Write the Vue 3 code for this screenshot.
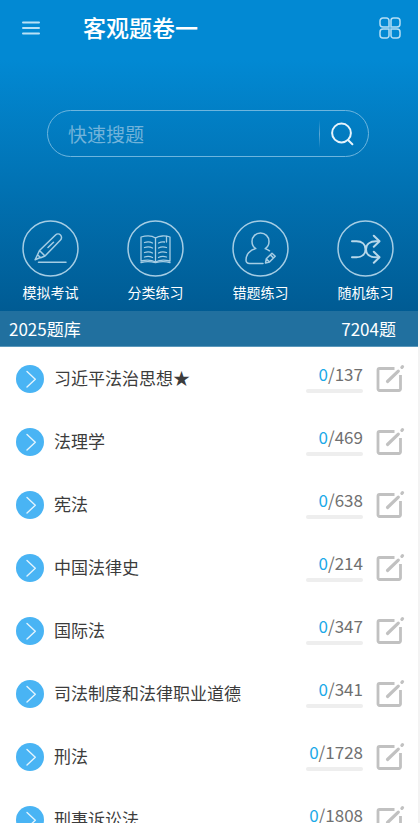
<script setup>
import { ref } from 'vue'

const keyword = ref('')

const modes = [
  { id: 'exam', label: '模拟考试' },
  { id: 'category', label: '分类练习' },
  { id: 'mistakes', label: '错题练习' },
  { id: 'random', label: '随机练习' }
]

const chapters = [
  { name: '习近平法治思想★', done: 0, total: 137 },
  { name: '法理学', done: 0, total: 469 },
  { name: '宪法', done: 0, total: 638 },
  { name: '中国法律史', done: 0, total: 214 },
  { name: '国际法', done: 0, total: 347 },
  { name: '司法制度和法律职业道德', done: 0, total: 341 },
  { name: '刑法', done: 0, total: 1728 },
  { name: '刑事诉讼法', done: 0, total: 1808 }
]
</script>

<template>
  <div class="page">
    <header class="hero">
      <div class="topbar">
        <button class="icon-btn" type="button" aria-label="菜单">
          <svg width="18" height="14" viewBox="0 0 18 14" fill="none" stroke="#b9e1f6" stroke-width="2" stroke-linecap="round">
            <path d="M1 1.500h16M1 7h16M1 12.500h16" />
          </svg>
        </button>
        <h1 class="title">客观题卷一</h1>
        <button class="icon-btn" type="button" aria-label="更多">
          <svg width="22" height="22" viewBox="0 0 22 22" fill="none" stroke="#b5def5" stroke-width="1.5">
            <path d="M4 1h3.5a2.5 2.5 0 0 1 2.5 2.5V10H4a3 3 0 0 1-3-3V4a3 3 0 0 1 3-3z" />
            <path d="M14.5 1H18a3 3 0 0 1 3 3v3a3 3 0 0 1-3 3h-6V3.500a2.500 2.500 0 0 1 2.500-2.500z" />
            <path d="M4 12h6v6.500A2.500 2.500 0 0 1 7.500 21H4a3 3 0 0 1-3-3v-3a3 3 0 0 1 3-3z" />
            <path d="M12 12h6a3 3 0 0 1 3 3v3a3 3 0 0 1-3 3h-3.500a2.500 2.500 0 0 1-2.500-2.500z" />
          </svg>
        </button>
      </div>

      <form class="search" @submit.prevent>
        <input v-model="keyword" class="search-input" type="text" placeholder="快速搜题" aria-label="快速搜题" />
        <span class="search-line"></span>
        <button class="search-btn" type="submit" aria-label="搜索">
          <svg width="24" height="24" viewBox="0 0 24 24" fill="none" stroke="#e6f4fc" stroke-width="2" stroke-linecap="round">
            <circle cx="11.500" cy="11" r="9.400" />
            <path d="M18 18l4.400 4.200" />
          </svg>
        </button>
      </form>

      <nav class="modes">
        <button v-for="m in modes" :key="m.id" class="mode" type="button">
          <svg class="mode-icon" viewBox="0 0 57 57" fill="none" stroke="#a5cde4" stroke-width="1.500" stroke-linecap="round" stroke-linejoin="round">
            <circle cx="28.500" cy="28.500" r="27.500" />
            <g v-if="m.id === 'exam'">
              <path d="M17.500 30.500L33.500 15a3.500 3.500 0 0 1 5 5L23 36M17.500 30.500l5.500 5.500M17.500 30.500l-2 4.200 3.200 3.100L23 36M15.500 34.700l-2.400 5 5.300-2.200M26 27.500l5.500-5.300" />
              <path d="M16.500 42.200h27.500" />
            </g>
            <g v-else-if="m.id === 'category'" stroke-width="1.300">
              <path d="M28.500 18c-3.500-2.500-9.500-2.500-14.500-1v24c4.500-1.200 11-1 14.500 1 3.500-2 10-2.200 14.500-1V17c-4.500-1.500-11-1.500-14.500 1zM28.500 18v24" />
              <path d="M14 42.500c5-1.200 11-.8 14.500.2 3.500-1 9.500-1.400 14.500-.2M39.500 16.500v5.500" />
              <path d="M17.500 22.500c3-1.100 5.500-.9 8 .5M17.500 27.500c3-1.100 5.500-.9 8 .5M17.500 32.500c3-1.100 5.500-.9 8 .5M17.500 37c3-1.100 5.500-.9 8 .5M31.500 23c2-1 4-1.400 6-1M31.500 28c2.500-1.400 5-1.600 8-.5M31.500 33c2.500-1.400 5-1.600 8-.5M31.500 37.500c2.500-1.400 5-1.600 8-.5" />
            </g>
            <g v-else-if="m.id === 'mistakes'">
              <path d="M37.500 30.800c-1.300-1-2.700-1.700-4.300-2.200 2.300-1.500 3.800-4.200 3.800-7.200a8.500 8.500 0 0 0-17 0c0 3 1.500 5.700 3.800 7.200-6 1.400-9.800 6-9.800 11.400 0 2.200 1.300 3.400 3.600 3.600H31" />
              <path d="M33.500 43l.8-4.200 5.700-5.600 3.200 3-5.700 5.800zM38.300 34.900l3.100 3M34.300 38.800l3.200 3.200" />
            </g>
            <g v-else stroke-width="2" stroke="#b8d8ea">
              <path d="M15 21.300h4.500c5.500 0 9 3.200 9 8s-3.500 8-9 8H15" />
              <path d="M42 21.300h-3c-6 0-10 3-10 8s4 8 10 8h3" />
              <path d="M36.800 15.800l5.700 5.500-5.700 5.500M36.800 31.800l5.700 5.500-5.700 5.500" />
            </g>
          </svg>
          <span class="mode-label">{{ m.label }}</span>
        </button>
      </nav>

      <div class="summary">
        <span>2025题库</span>
        <span>7204题</span>
      </div>
    </header>

    <ul class="chapters">
      <li v-for="c in chapters" :key="c.name" class="chapter">
        <button class="expand" type="button" :aria-label="'展开' + c.name">
          <svg width="28" height="28" viewBox="0 0 28 28" fill="none">
            <circle cx="14" cy="14" r="14" fill="#49b4f4" />
            <path d="M11 6.500l8.300 7.700-8.300 7.700" stroke="#e3f4fe" stroke-width="1.400" stroke-linecap="round" stroke-linejoin="round" />
          </svg>
        </button>
        <span class="name">{{ c.name }}</span>
        <div class="progress">
          <span class="count"><span class="done">{{ c.done }}</span>/{{ c.total }}</span>
          <span class="track"><span class="fill" :style="{ width: (c.done / c.total) * 100 + '%' }"></span></span>
        </div>
        <button class="edit" type="button" :aria-label="'练习' + c.name">
          <svg width="30" height="30" viewBox="0 0 30 30" fill="none" stroke="#c1c1c1" stroke-width="2.800" stroke-linecap="round" stroke-linejoin="round">
            <path d="M19.500 4.500H4.500a1.500 1.500 0 0 0-1.500 1.500v19a1.500 1.500 0 0 0 1.500 1.500h19.500a1.500 1.500 0 0 0 1.500-1.500V11" stroke-linecap="butt" />
            <path d="M12.500 17.500L23.300 7.200M26.900 3.300l.6-.6" stroke-width="3.200" />
          </svg>
        </button>
      </li>
    </ul>
  </div>
</template>

<style>
body {
  margin: 0;
  background: #f3f3f3;
}
</style>

<style scoped>
.page {
  box-sizing: border-box;
  height: 100vh;
  display: flex;
  flex-direction: column;
  padding-right: 2px;
  overflow: hidden;
  font-family: "Noto Sans CJK SC", "Noto Sans", sans-serif;
}

button {
  display: flex;
  align-items: center;
  justify-content: center;
  padding: 0;
  border: 0;
  background: none;
  color: inherit;
  font: inherit;
  cursor: pointer;
}

.hero {
  flex: none;
  background: linear-gradient(#0289d3 0, #0289d3 60px, #005b93 312px);
  color: #fff;
}

.topbar {
  display: flex;
  align-items: center;
  height: 56px;
  padding: 0 16px;
}

.icon-btn {
  width: 24px;
  height: 24px;
  margin-left: 3px;
}

.title {
  flex: 1;
  margin: 0;
  padding: 0 0 2px 40px;
  font-size: 23px;
  line-height: 32px;
  font-weight: 500;
}

.search {
  display: flex;
  align-items: center;
  box-sizing: border-box;
  height: 47px;
  margin: 54px 49px 0 47px;
  padding: 0 14px 0 20px;
  border: 1px solid #6db5de;
  border-radius: 24px;
}

.search-input {
  flex: 1;
  min-width: 0;
  padding: 0;
  border: 0;
  outline: 0;
  background: none;
  color: #fff;
  font: inherit;
  font-size: 19px;
  line-height: 28px;
}

.search-input::placeholder {
  color: #71b3da;
  opacity: 1;
}

.search-line {
  width: 1px;
  height: 28px;
  margin-right: 10px;
  background: linear-gradient(transparent, #5fa9d4, transparent);
}

.search-btn {
  width: 24px;
  height: 24px;
}

.modes {
  display: grid;
  grid-template-columns: repeat(4, 1fr);
  margin: 63px 0 0 -2px;
  padding-bottom: 9px;
}

.mode {
  flex-direction: column;
  gap: 5px;
}

.mode-icon {
  width: 57px;
  height: 57px;
}

.mode-label {
  font-size: 14px;
  line-height: 20px;
}

.summary {
  display: flex;
  align-items: center;
  justify-content: space-between;
  box-sizing: border-box;
  height: 36px;
  padding: 0 22px 0 9px;
  border-bottom: 1px solid #5b98bb;
  background: #21709f;
  font-size: 17px;
  line-height: 24px;
}

.chapters {
  flex: 1;
  min-height: 0;
  margin: 0;
  padding: 0;
  overflow-y: auto;
  scrollbar-width: none;
  list-style: none;
  background: #fff;
}

.chapter {
  display: flex;
  align-items: center;
  height: 63px;
  padding: 0 13px 0 16px;
}

.name {
  flex: 1;
  margin-left: 10px;
  padding-bottom: 2px;
  color: #3c3c3c;
  font-size: 17px;
  line-height: 24px;
}

.progress {
  display: flex;
  flex-direction: column;
  width: 57px;
  gap: 3px;
  padding-bottom: 3px;
}

.count {
  align-self: flex-end;
  color: #707070;
  font-size: 17px;
  line-height: 24px;
}

.done {
  color: #1ba9e8;
}

.track {
  height: 4px;
  border-radius: 2px;
  background: #eee;
}

.fill {
  display: block;
  height: 4px;
  border-radius: 2px;
  background: #1ba9e8;
}

.edit {
  margin-left: 12px;
}
</style>
